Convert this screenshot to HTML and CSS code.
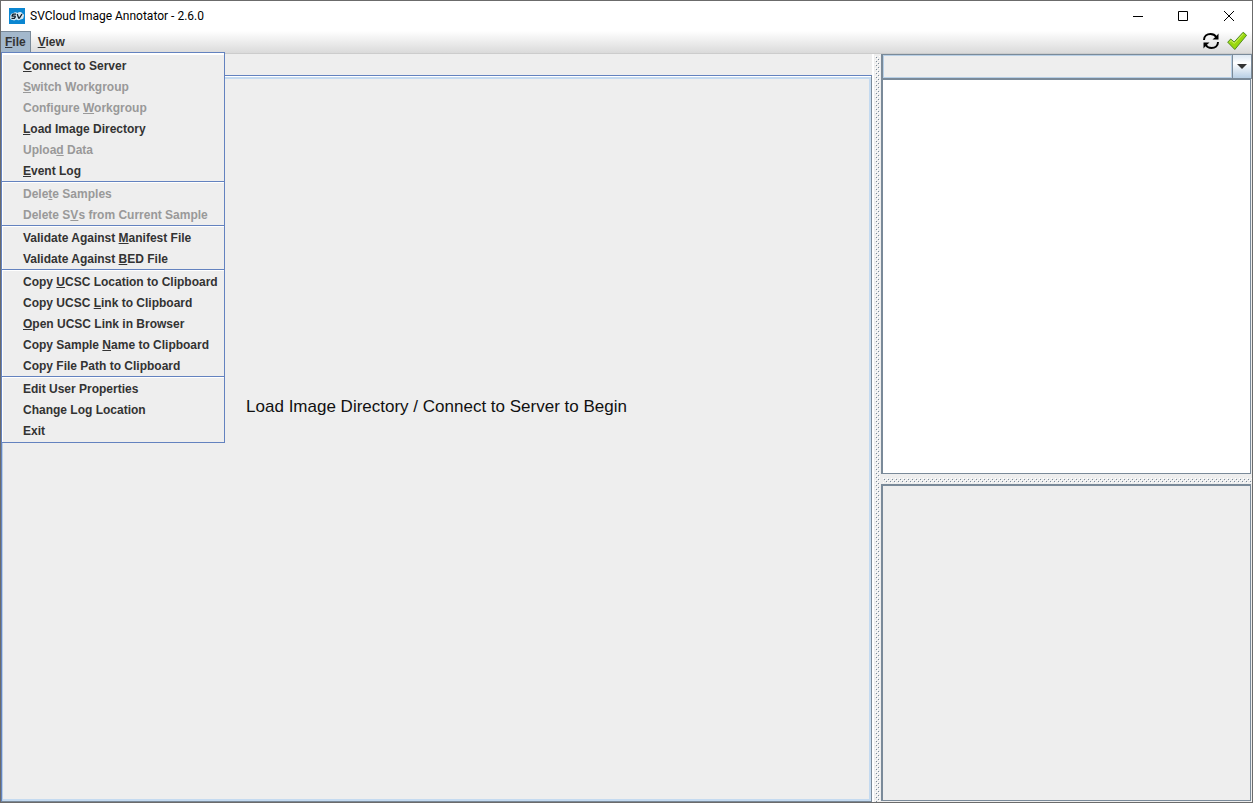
FILE: index.html
```html
<!DOCTYPE html>
<html lang="en">
<head>
<meta charset="utf-8">
<title>SVCloud Image Annotator - 2.6.0</title>
<link rel="stylesheet" href="styles.css">
</head>
<body>
<div class="window">
  <header class="titlebar">
    <svg class="app-icon" viewBox="0 0 16 16" aria-hidden="true">
      <rect width="16" height="16" fill="#0a86d1"/>
      <path d="M3.5 12C1.5 12 .8 10.6 1.2 9.200C1 7 2.200 5.300 4 5.300C5.500 3.800 7.500 4 8.500 5C10 3.700 12.500 3.800 13.300 5.500C15 5.800 15.500 7.500 14.600 8.800C14.800 10.600 13.500 11.500 12 11.300C10.500 12.600 8.500 12.500 7.500 11.600C6.500 12.500 4.700 12.700 3.500 12Z" fill="#d5e7f2"/>
      <path d="M7 6.200H4.200L3.200 7.200V8.200H6L6.300 9L5.300 10.300H2.500M8.200 6L9.700 10.200H10.400L13 6" fill="none" stroke="#10202c" stroke-width="1.300"/>
    </svg>
    <h1 class="title">SVCloud Image Annotator - 2.6.0</h1>
    <div class="window-controls">
      <button class="window-button" aria-label="Minimize"><svg viewBox="0 0 12 12"><path d="M2 6.500H12" /></svg></button>
      <button class="window-button" aria-label="Maximize"><svg viewBox="0 0 12 12"><path d="M1.500 1.500H10.500V10.500H1.500Z"/></svg></button>
      <button class="window-button" aria-label="Close"><svg viewBox="0 0 12 12"><path d="M1 1L11 11M11 1L1 11"/></svg></button>
    </div>
  </header>

  <nav class="menubar">
    <div class="menu-holder">
      <button class="menu-title menu-title-open" aria-expanded="true"><u>F</u>ile</button>
      <div class="menu" role="menu">
        <div class="menu-group">
          <button class="menu-item" role="menuitem"><u>C</u>onnect to Server</button>
          <button class="menu-item" role="menuitem" disabled><u>S</u>witch Workgroup</button>
          <button class="menu-item" role="menuitem" disabled>Configure <u>W</u>orkgroup</button>
          <button class="menu-item" role="menuitem"><u>L</u>oad Image Directory</button>
          <button class="menu-item" role="menuitem" disabled>Uploa<u>d</u> Data</button>
          <button class="menu-item" role="menuitem"><u>E</u>vent Log</button>
        </div>
        <div class="menu-group">
          <button class="menu-item" role="menuitem" disabled>Dele<u>t</u>e Samples</button>
          <button class="menu-item" role="menuitem" disabled>Delete S<u>V</u>s from Current Sample</button>
        </div>
        <div class="menu-group">
          <button class="menu-item" role="menuitem">Validate Against <u>M</u>anifest File</button>
          <button class="menu-item" role="menuitem">Validate Against <u>B</u>ED File</button>
        </div>
        <div class="menu-group">
          <button class="menu-item" role="menuitem">Copy <u>U</u>CSC Location to Clipboard</button>
          <button class="menu-item" role="menuitem">Copy UCSC <u>L</u>ink to Clipboard</button>
          <button class="menu-item" role="menuitem"><u>O</u>pen UCSC Link in Browser</button>
          <button class="menu-item" role="menuitem">Copy Sample <u>N</u>ame to Clipboard</button>
          <button class="menu-item" role="menuitem">Copy File Path to Clipboard</button>
        </div>
        <div class="menu-group">
          <button class="menu-item" role="menuitem">Edit User Properties</button>
          <button class="menu-item" role="menuitem">Change Log Location</button>
          <button class="menu-item" role="menuitem">Exit</button>
        </div>
      </div>
    </div>
    <button class="menu-title"><u>V</u>iew</button>
    <div class="status">
      <svg class="status-icon" viewBox="0 0 20 20" role="img" aria-label="Refresh">
        <path d="M3 9C3 5.200 6 3 9.500 3C12 3 14 4 15.300 6M17 11C17 14.800 14 17 10.500 17C8 17 6 16 4.700 14" fill="none" stroke="#000" stroke-width="2"/>
        <path d="M17.500 2.500V8.500H11.500L14 6.300L15.800 4.500ZM2.500 17.500V11.500H8.500L6 13.700L4.200 15.500Z"/>
      </svg>
      <svg class="status-icon" viewBox="0 0 20 20" role="img" aria-label="Ready">
        <path d="M.7 11.200L3.700 8L7.200 11L16.200 1.200L19.600 4.300L7.800 18.500Z" fill="#99d80c" stroke="#528b22" stroke-width="1" stroke-linejoin="round"/>
        <path d="M2.500 11L4 9.600L7.300 12.400L16.200 3" fill="none" stroke="#d3f16b" stroke-width="1"/>
      </svg>
    </div>
  </nav>

  <main class="workspace">
    <section class="viewer">
      <div class="canvas"><p class="hint">Load Image Directory / Connect to Server to Begin</p></div>
    </section>
    <div class="divider divider-vertical"></div>
    <aside class="sidebar">
      <div class="combo">
        <select class="combo-field" aria-label="Sample"><option></option></select>
        <span class="combo-arrow"><svg viewBox="0 0 10 5"><path d="M0 0H10L5 5Z" fill="#333"/></svg></span>
      </div>
      <div class="list"></div>
      <div class="divider divider-horizontal"></div>
      <div class="details"></div>
    </aside>
  </main>
</div>
</body>
</html>
```

FILE: styles.css
```css
* { box-sizing: border-box; }

body {
  margin: 0;
  font: bold 12px/15px "Liberation Sans", Arial, sans-serif;
  color: #333;
  background: #eee;
}

button {
  margin: 0;
  border: 0;
  padding: 0;
  font: inherit;
  color: inherit;
  background: none;
}

u {
  text-decoration-thickness: 1px;
  text-underline-offset: 1px;
  text-decoration-skip-ink: none;
}

.window {
  display: flex;
  flex-direction: column;
  height: 100vh;
  border: 1px solid #6b6b6b;
}

.titlebar {
  display: flex;
  align-items: center;
  height: 30px;
  padding-left: 8px;
  background: #fff;
}

.app-icon { width: 16px; height: 16px; }

.title {
  margin: 0 auto 0 5px;
  font: 12px/16px Roboto, "Open Sans", sans-serif;
  color: #000;
}

.window-controls { display: flex; }

.window-button {
  display: grid;
  place-items: center;
  width: 46px;
  height: 28px;
}

.window-button svg {
  width: 12px;
  height: 12px;
  fill: none;
  stroke: #000;
}

.menubar {
  display: flex;
  height: 23px;
  border-bottom: 1px solid #ccc;
  background: linear-gradient(#fff, #dadada);
}

.menu-holder { position: relative; }

.menu-title {
  height: 21px;
  padding: 1px 7px 0;
}

.menu-title-open {
  padding: 0 4px;
  border-right: 1px solid #7a8a99;
  border-top: 1px solid #7a8a99;
  background: #a3b8cc;
}

.menu {
  position: absolute;
  top: 21px;
  left: 0;
  z-index: 1;
  border: 1px solid #6382bf;
  padding: 1px 0;
  background: #eee;
  box-shadow: inset 1px 1px #fff;
}

.menu-group {
  display: flex;
  flex-direction: column;
  border-top: 1px solid #fff;
}

.menu-group + .menu-group { box-shadow: 0 -1px #6382bf; margin-top: 1px; }

.menu-item {
  height: 21px;
  padding: 2px 6px 0 21px;
  text-align: left;
  white-space: nowrap;
}

.menu-item:disabled { color: #999; }

.status {
  display: flex;
  gap: 6px;
  margin-left: auto;
  padding-right: 5px;
}

.status-icon { width: 20px; height: 20px; }

.workspace {
  display: grid;
  grid-template-columns: minmax(0, 871fr) 9px minmax(0, 371fr);
  flex: 1;
  min-height: 0;
}

.viewer {
  display: flex;
  padding-top: 21px;
}

.canvas {
  display: grid;
  flex: 1;
  place-items: center;
  border: 1px solid #6382bf;
  border-right-color: #7a8a99;
  border-bottom-color: #7a8a99;
  box-shadow:
    inset 0 1px #fff,
    inset 0 3px #c4daf0,
    inset 1px 0 #b8cfe5,
    inset -2px -2px #c4daf0;
}

.hint {
  margin: 0;
  padding-bottom: 63px;
  font-size: 17px;
  line-height: 24px;
  font-weight: normal;
  color: #111;
}

.divider {
  background-color: #eee;
  background-image:
    conic-gradient(at 1px 1px, transparent 75%, #7a8a99 0),
    conic-gradient(at 1px 1px, transparent 75%, #7a8a99 0),
    conic-gradient(at 1px 1px, transparent 75%, #fff 0),
    conic-gradient(at 1px 1px, transparent 75%, #fff 0);
  background-size: 4px 4px;
  background-origin: content-box;
  background-clip: content-box;
  background-position: 1px 1px, 3px 3px, 0 0, 2px 2px;
}

.divider-vertical {
  padding: 2px 1px 0 3px;
  box-shadow: inset 2px 0 #fff;
}

.divider-horizontal {
  height: 10px;
  padding: 4px 0 1px 2px;
}

.sidebar {
  display: flex;
  flex-direction: column;
  min-width: 0;
}

.combo {
  display: flex;
  height: 25px;
  border: 1px solid #7a8a99;
  border-width: 1px 0 1px 2px;
}

.combo-field {
  flex: 1;
  min-width: 0;
  border: 1px solid #b8cfe5;
  border-radius: 0;
  appearance: none;
  background: #eee;
}

.combo-arrow {
  display: grid;
  place-items: center;
  width: 20px;
  border: 1px solid #7a8a99;
  border-width: 0 1px;
  background: linear-gradient(#dde8f3, #fff 35%, #b8cfe5);
}

.combo-arrow svg { width: 10px; height: 5px; }

.list {
  flex: 393;
  margin-right: 1px;
  border: 1px solid #7a8a99;
  border-left-width: 2px;
  background: #fff;
}

.details {
  flex: 314;
  margin: 0 1px 1px 0;
  border: solid #7a8a99;
  border-width: 2px 1px 1px 2px;
}
```
